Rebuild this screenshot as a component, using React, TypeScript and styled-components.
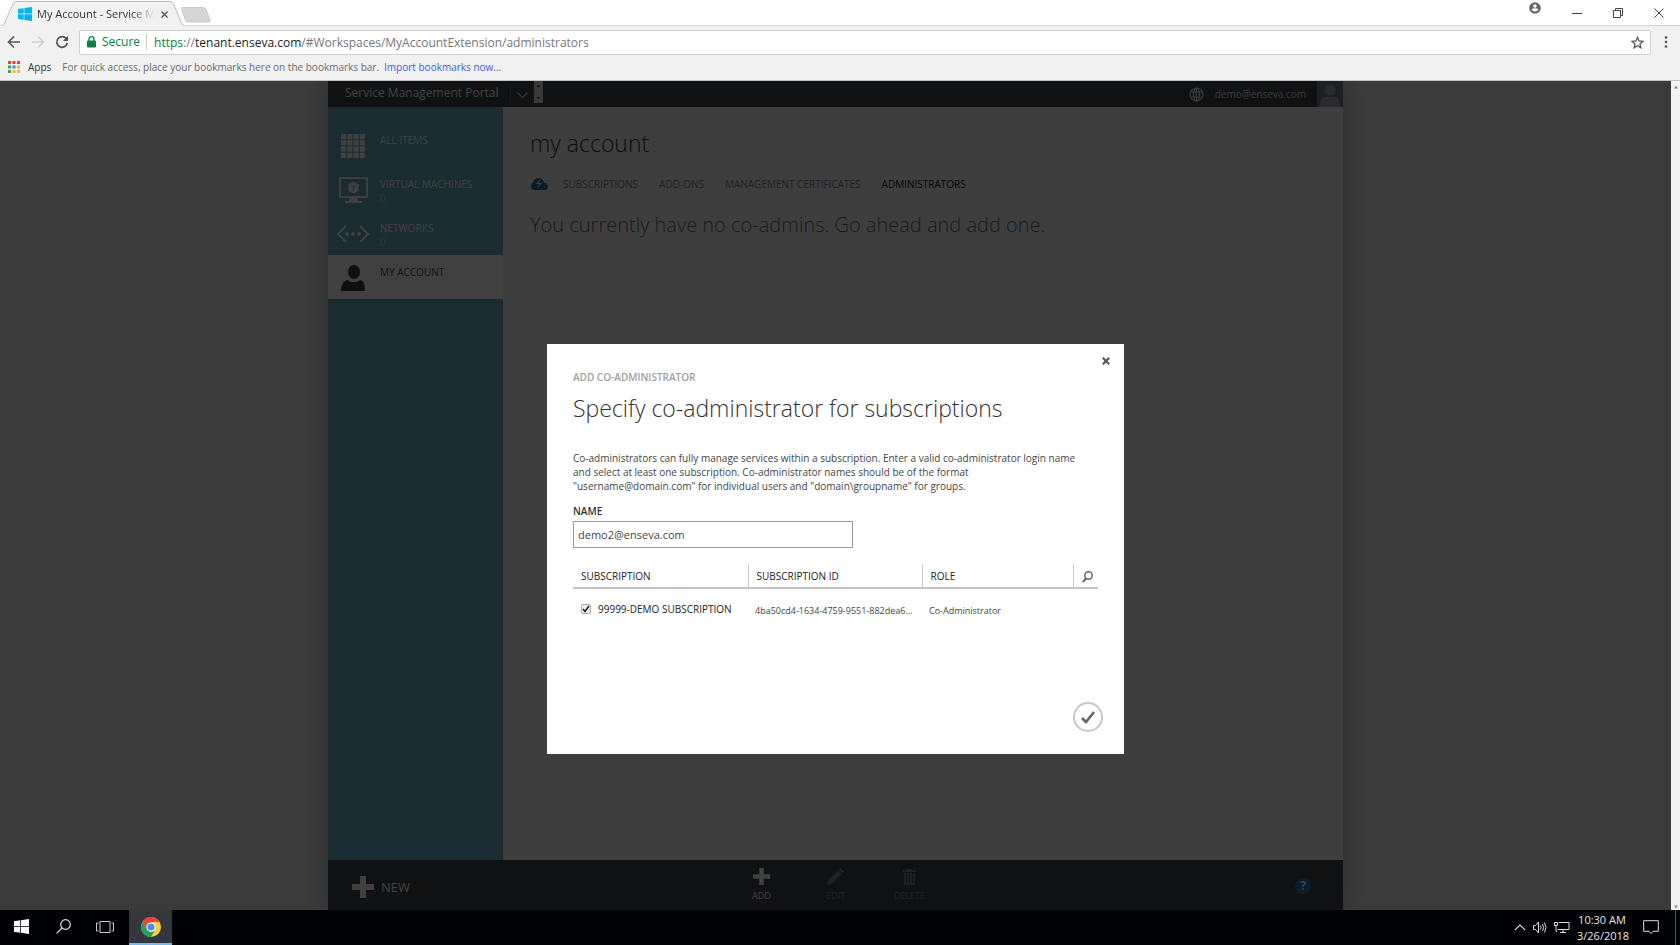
import React from 'react';
import styled, { createGlobalStyle } from 'styled-components';

const GlobalStyle = createGlobalStyle`
  *, *::before, *::after { box-sizing: border-box; }
  body { margin: 0; background: #000; }
  body, button, input { font-family: 'Open Sans', 'Noto Sans', sans-serif; }
  button { margin: 0; padding: 0; border: 0; background: none; color: inherit; cursor: pointer; }
  h1, h2, p { margin: 0; }
  a { text-decoration: none; color: inherit; }
  svg { display: block; flex: none; }
`;

const Screen = styled.div`
  display: flex;
  flex-direction: column;
  min-height: 100vh;
`;

/* Browser frame */

const TabStrip = styled.header`
  display: flex;
  height: 26px;
  background: #fefefe;
  border-bottom: 1px solid #d4d4d4;
`;

const BrowserTab = styled.div`
  position: relative;
  display: flex;
  align-items: center;
  width: 181px;
  height: 26px;
  padding: 2px 0 0 18px;
`;

const TabShape = styled.svg`
  position: absolute;
  left: 0;
  top: 0;
`;

const TabTitle = styled.span`
  position: relative;
  width: 118px;
  margin: 0 6px 0 5px;
  white-space: nowrap;
  font-size: 11px;
  line-height: 18px;
  color: #333;
  mask-image: linear-gradient(to right, #000 80%, transparent);
`;

const Layer = styled.span`
  position: relative;
`;

const TabClose = styled.button`
  position: relative;
`;

const NewTab = styled.button`
  align-self: flex-start;
  margin-top: 7px;
`;

const WindowControls = styled.div`
  display: flex;
  gap: 31px;
  margin-left: auto;
  padding-right: 16px;
`;

const WindowButton = styled.button<{ $raised?: boolean }>`
  display: flex;
  align-items: center;
  height: ${p => (p.$raised ? 16 : 25)}px;
`;

const Toolbar = styled.div`
  display: flex;
  align-items: center;
  height: 32px;
  padding: 0 12px 0 7px;
  background: #f1f1f1;
`;

const NavButtons = styled.div`
  display: flex;
  gap: 10px;
  width: 72px;
`;

const Omnibox = styled.div`
  display: flex;
  flex: 1;
  align-items: center;
  height: 25px;
  padding: 0 6px 0 7px;
  background: #fff;
  border: 1px solid #d0d0d0;
  border-radius: 2px;
  font-size: 12px;
`;

const Secure = styled.span`
  margin-left: 6px;
  padding-right: 6px;
  border-right: 1px solid #ccc;
  line-height: 16px;
  color: #0b8043;
`;

const Address = styled.span`
  flex: 1;
  padding-left: 7px;
  color: #777;
  b { font-weight: 400; color: #222; }
  i { font-style: normal; color: #0b8043; }
`;

const MenuButton = styled.button`
  margin-left: 13px;
`;

const BookmarksBar = styled.nav`
  display: flex;
  align-items: center;
  height: 23px;
  padding: 0 8px 4px;
  background: #f1f1f1;
  border-bottom: 1px solid #c4c4c4;
  font-size: 10px;
  color: #6a6a6a;
  a { margin-left: 5px; color: #3b62d6; }
`;

const Apps = styled.button`
  display: flex;
  align-items: center;
  gap: 8px;
  margin-right: 11px;
  font-size: 10px;
  color: #333;
`;

/* Web page */

const Page = styled.div`
  position: relative;
  display: flex;
  flex: 1;
`;

const Backdrop = styled.div`
  display: flex;
  flex: 1;
  justify-content: center;
  overflow: hidden;
  background: #e8e8e8;
`;

const Portal = styled.div`
  display: flex;
  flex-direction: column;
  width: 100%;
  max-width: 1015px;
  background: #f8f8f8;
  box-shadow: 0 0 24px rgba(0, 0, 0, 0.25);
`;

const PortalHeader = styled.header`
  display: flex;
  align-items: center;
  height: 26px;
  padding-left: 17px;
  background: #404448;
  color: #fff;
  font-size: 12px;
`;

const Brand = styled.span`
  padding: 0 11px 2px 0;
  border-right: 1px solid #5c6064;
  line-height: 16px;
`;

const HeaderButton = styled.button`
  margin: 2px 6px 0 6px;
`;

const Spinner = styled.button`
  display: flex;
  align-self: flex-start;
`;

const Account = styled.div`
  display: flex;
  align-items: center;
  gap: 11px;
  margin-left: auto;
  font-size: 10px;
  color: #e4e4e4;
`;

const PortalBody = styled.div`
  display: flex;
  flex: 1;
`;

const Sidebar = styled.nav`
  width: 175px;
  padding-top: 16px;
  background: #6cacc8;
`;

const SideItem = styled.a<{ $active?: boolean }>`
  display: flex;
  height: 44px;
  padding-left: 8px;
  background: ${p => (p.$active ? '#fff' : 'transparent')};
  color: ${p => (p.$active ? '#3c3c44' : '#fff')};
`;

const SideIcon = styled.span`
  display: flex;
  align-items: center;
  justify-content: center;
  width: 34px;
  height: 46px;
`;

const SideLabel = styled.span`
  margin-left: 10px;
  padding-top: 10px;
  font-size: 10px;
  line-height: 14px;
  small {
    display: block;
    font-size: 10px;
    color: #b4d4e4;
  }
`;

const Main = styled.main`
  flex: 1;
  padding: 19px 27px;
`;

const PageTitle = styled.h1`
  font-size: 23px;
  font-weight: 300;
  line-height: 34px;
  color: #333;
`;

const TabRow = styled.nav`
  display: flex;
  align-items: center;
  gap: 21px;
  margin-top: 16px;
  font-size: 10px;
  line-height: 16px;
  color: #7c7c7c;
`;

const TabLink = styled.a<{ $active?: boolean }>`
  color: ${p => (p.$active ? '#101010' : 'inherit')};
`;

const CloudMark = styled.span`
  margin-right: -6px;
`;

const EmptyNote = styled.p`
  margin-top: 17px;
  font-size: 20px;
  font-weight: 300;
  line-height: 32px;
  color: #666;
`;

const CommandBar = styled.footer`
  display: grid;
  grid-template-columns: 1fr auto 1fr;
  align-items: center;
  height: 50px;
  padding: 0 24px;
  background: #404448;
  color: #fff;
`;

const NewButton = styled.button`
  display: flex;
  align-items: center;
  gap: 7px;
  margin-top: 3px;
  font-size: 13px;
`;

const Commands = styled.div`
  display: flex;
`;

const Command = styled.button`
  display: flex;
  flex-direction: column;
  align-items: center;
  gap: 4px;
  width: 74px;
  font-size: 9px;
  line-height: 13px;
  &:disabled { color: #8c8c8c; }
`;

const HelpButton = styled.button`
  justify-self: end;
  width: 16px;
  height: 16px;
  margin: 2px 8px 0 0;
  border-radius: 50%;
  background: #1c78c0;
  color: #fff;
  font-size: 12px;
  font-weight: 700;
  line-height: 16px;
`;

const Scrollbar = styled.div`
  display: flex;
  flex-direction: column;
  justify-content: space-between;
  align-items: center;
  width: 9px;
  padding: 4px 0 1px;
  background: #f1f1f1;
`;

/* Dialog */

const Overlay = styled.div`
  position: absolute;
  inset: 0 9px 0 0;
  display: flex;
  align-items: flex-start;
  justify-content: center;
  padding-top: 263px;
  background: rgba(0, 0, 0, 0.75);
`;

const Dialog = styled.form`
  display: flex;
  flex-direction: column;
  width: 577px;
  min-height: 410px;
  padding: 11px 21px 22px 26px;
  background: #fff;
  color: #444;
`;

const DialogClose = styled.button`
  align-self: flex-end;
  margin: 0 -9px 0 0;
  padding: 2px;
`;

const Eyebrow = styled.p`
  margin-top: 2px;
  font-size: 10px;
  font-weight: 600;
  line-height: 16px;
  color: #a0a0a0;
`;

const DialogTitle = styled.h2`
  margin-top: 6px;
  font-size: 23px;
  font-weight: 300;
  line-height: 34px;
  color: #333;
`;

const Description = styled.p`
  margin-top: 26px;
  font-size: 10px;
  line-height: 14px;
`;

const FieldLabel = styled.label`
  margin-top: 10px;
  font-size: 10px;
  font-weight: 600;
  line-height: 16px;
  color: #333;
`;

const TextField = styled.input`
  width: 280px;
  height: 27px;
  margin-top: 2px;
  padding: 0 4px;
  border: 1px solid #999;
  outline: 0;
  font-size: 11px;
  color: #444;
`;

const Grid = styled.table`
  width: 525px;
  margin-top: 16px;
  border-collapse: collapse;
  table-layout: fixed;
  font-size: 9px;
  text-align: left;
`;

const HeadCell = styled.th<{ $width: number }>`
  width: ${p => p.$width}px;
  height: 24px;
  padding: 0 0 0 8px;
  border-bottom: 2px solid #c4c4c4;
  border-right: 1px solid #c8c8c8;
  font-size: 10px;
  font-weight: 500;
  color: #222;
  &:last-child { border-right: 0; }
`;

const SearchButton = styled.button`
  display: block;
  margin-top: 2px;
`;

const Cell = styled.td`
  height: 44px;
  padding: 0 0 0 7px;
  white-space: nowrap;
`;

const RowLabel = styled.label`
  display: flex;
  align-items: center;
  gap: 7px;
  padding-bottom: 3px;
  font-size: 10px;
  font-weight: 500;
  color: #222;
`;

const CheckBox = styled.input`
  appearance: none;
  width: 10px;
  height: 10px;
  margin: 0 0 0 1px;
  border: 1px solid #aaa;
  border-radius: 2px;
  background: #eee;
  &:checked {
    background: #eee url("data:image/svg+xml,%3Csvg xmlns='http://www.w3.org/2000/svg' viewBox='0 0 8 8'%3E%3Cpath d='M1 4l2 2.4L7 1' fill='none' stroke='%23222' stroke-width='1.6'/%3E%3C/svg%3E") center / 8px 8px;
  }
`;

const SubmitButton = styled.button`
  display: flex;
  align-items: center;
  justify-content: center;
  align-self: flex-end;
  width: 30px;
  height: 30px;
  margin-top: auto;
  border: 2px solid #c8c8c8;
  border-radius: 50%;
`;

/* Taskbar */

const Taskbar = styled.footer`
  display: flex;
  align-items: stretch;
  height: 35px;
  background: #010205;
  color: #e6e6e6;
`;

const TaskButton = styled.button<{ $active?: boolean }>`
  display: flex;
  align-items: center;
  justify-content: center;
  width: ${p => (p.$active ? 43 : 42)}px;
  margin-left: ${p => (p.$active ? 3 : 0)}px;
  background: ${p => (p.$active ? '#35373c' : 'transparent')};
  border-bottom: 2px solid ${p => (p.$active ? '#76b9ed' : 'transparent')};
`;

const Tray = styled.div`
  display: flex;
  align-items: center;
  gap: 7px;
  margin-left: auto;
  padding-right: 4px;
`;

const Clock = styled.time`
  width: 50px;
  font-size: 11px;
  line-height: 16px;
  text-align: center;
  white-space: nowrap;
`;

const Notifications = styled.button`
  margin: 0 9px;
`;

const DesktopEdge = styled.span`
  align-self: stretch;
  width: 1px;
  background: #555;
`;

const WindowsLogo = ({ size, color }: { size: number; color: string }) => (
  <svg width={size} height={size} viewBox="0 0 14 14" fill={color}>
    <path d="M0 2l5.7-.8v5.4H0zM6.4 1.1L14 0v6.6H6.4zM0 7.3h5.7v5.5L0 12zM6.4 7.3H14V14l-7.6-1.1z" />
  </svg>
);

const Plus = ({ size }: { size: number }) => (
  <svg width={size} height={size} viewBox="0 0 22 22" fill="currentColor">
    <path d="M8 0h6v8h8v6h-8v8H8v-8H0V8h8z" />
  </svg>
);

const APP_COLORS = ['#ea4335', '#ea4335', '#ea4335', '#34a853', '#4285f4', '#fbbc05', '#34a853', '#fbbc05', '#fbbc05'];

const GridIcon = () => (
  <svg width="24" height="24" viewBox="0 0 24 24" fill="currentColor">
    {[0, 1, 2, 3].map(r =>
      [0, 1, 2, 3].map(c => <rect key={`${r}${c}`} x={c * 6.25} y={r * 6.25} width="5.2" height="5.2" />)
    )}
  </svg>
);

const MachineIcon = () => (
  <svg width="29" height="27" viewBox="0 0 29 27">
    <rect x="1" y="1" width="27" height="19" fill="none" stroke="currentColor" strokeWidth="1.8" />
    <path d="M11 20h7l1 4h4v2H6v-2h4z" fill="currentColor" />
    <path d="M14.5 4.500l5 2.800v6.400l-5 2.800-5-2.800V7.300z" fill="currentColor" />
    <path d="M12 8.500l2.500 1.800L17 8.500M14.500 10.300v3.400" fill="none" stroke="#6cacc8" strokeWidth="1" />
  </svg>
);

const NetworkIcon = () => (
  <svg width="34" height="18" viewBox="0 0 34 18">
    <path d="M10 1L2 9l8 8M24 1l8 8-8 8" fill="none" stroke="currentColor" strokeWidth="2" />
    <g fill="currentColor">
      <circle cx="11" cy="9" r="1.900" />
      <circle cx="17" cy="9" r="1.900" />
      <circle cx="23" cy="9" r="1.900" />
    </g>
  </svg>
);

const PersonIcon = () => (
  <svg width="24" height="26" viewBox="0 0 24 26" fill="currentColor">
    <ellipse cx="13" cy="7" rx="6" ry="7" />
    <path d="M0 26c0-6 2-10 7-11 3 3 9 3 12 0 4 1 5 5 5 11z" />
  </svg>
);

const ChromeIcon = () => (
  <svg width="20" height="20" viewBox="0 0 20 20">
    <circle cx="10" cy="10" r="10" fill="#ffcd40" />
    <path d="M10 10L5.700 12.500 1.340 5A10 10 0 0 1 18.660 5H10z" fill="#dd4b3e" />
    <path d="M1.340 5L5.700 12.500l4.300 2.500 3.500-1L10 20A10 10 0 0 1 1.340 5z" fill="#1da462" />
    <circle cx="10" cy="10" r="4.600" fill="#fff" />
    <circle cx="10" cy="10" r="3.600" fill="#4c8bf5" />
  </svg>
);

const GlobeIcon = () => (
  <svg width="15" height="15" viewBox="0 0 15 15" fill="none" stroke="#e4e4e4" strokeWidth="1.200">
    <circle cx="7.500" cy="7.500" r="6.500" />
    <ellipse cx="7.500" cy="7.500" rx="3" ry="6.500" />
    <path d="M1.500 5h12M1.500 10h12M7.500 1v13" />
  </svg>
);

const sideItems = [
  { label: 'ALL ITEMS', icon: <GridIcon /> },
  { label: 'VIRTUAL MACHINES', count: '0', icon: <MachineIcon /> },
  { label: 'NETWORKS', count: '0', icon: <NetworkIcon /> },
  { label: 'MY ACCOUNT', icon: <PersonIcon />, active: true },
];

const tabs = ['SUBSCRIPTIONS', 'ADD-ONS', 'MANAGEMENT CERTIFICATES', 'ADMINISTRATORS'];

function BrowserChrome() {
  return (
    <>
      <TabStrip>
        <BrowserTab>
          <TabShape width="188" height="26" viewBox="0 0 188 26">
            <path d="M2 26Q4 25 5 22L13 4Q14 1.500 16 1.500H170Q172.500 1.500 173.500 4L181 22Q182 25 184 26z" fill="#f1f1f1" />
            <path d="M2 25.500Q4 25 5 22L13 4Q14 1.500 16 1.500H170Q172.500 1.500 173.500 4L181 22Q182 25 184 25.500" fill="none" stroke="#bcbcbc" />
          </TabShape>
          <Layer><WindowsLogo size={14} color="#00b4f0" /></Layer>
          <TabTitle>My Account - Service Ma</TabTitle>
          <TabClose type="button" aria-label="Close tab">
            <svg width="7" height="7" viewBox="0 0 7 7" stroke="#555" strokeWidth="1.300"><path d="M.5.5l6 6M6.500.5l-6 6" /></svg>
          </TabClose>
        </BrowserTab>
        <NewTab type="button" aria-label="New tab">
          <svg width="30" height="16" viewBox="0 0 30 16"><path d="M1.500.5H22q2 0 3 2l4 10.500q.6 2-1.500 2H7q-2 0-2.600-2L.6 2.500Q0 .5 1.500.5z" fill="#d6d6d6" stroke="#cacaca" /></svg>
        </NewTab>
        <WindowControls>
          <WindowButton type="button" aria-label="Profile" $raised>
            <svg width="12" height="12" viewBox="0 0 12 12"><circle cx="6" cy="6" r="5.800" fill="#666" /><circle cx="6" cy="4" r="1.700" fill="#fff" /><path d="M2.500 7q3.500-1.300 7 0Q8.500 9.500 6 9.500T2.500 7z" fill="#fff" /></svg>
          </WindowButton>
          <WindowButton type="button" aria-label="Minimize">
            <svg width="10" height="10" viewBox="0 0 10 10" stroke="#444"><path d="M0 5.500h10" /></svg>
          </WindowButton>
          <WindowButton type="button" aria-label="Restore">
            <svg width="10" height="10" viewBox="0 0 10 10" fill="none" stroke="#444"><path d="M.5 2.500h7v7h-7zM2.500 2.500v-2h7v7h-2" /></svg>
          </WindowButton>
          <WindowButton type="button" aria-label="Close">
            <svg width="10" height="10" viewBox="0 0 10 10" stroke="#444"><path d="M.5.5l9 9M9.500.5l-9 9" /></svg>
          </WindowButton>
        </WindowControls>
      </TabStrip>
      <Toolbar>
        <NavButtons>
          <button type="button" aria-label="Back">
            <svg width="14" height="14" viewBox="0 0 14 14" fill="none" stroke="#555" strokeWidth="1.600"><path d="M13 7H2M7 1.500L1.500 7 7 12.500" /></svg>
          </button>
          <button type="button" aria-label="Forward" disabled>
            <svg width="14" height="14" viewBox="0 0 14 14" fill="none" stroke="#d0d0d0" strokeWidth="1.600"><path d="M1 7h11M7 1.500L12.500 7 7 12.500" /></svg>
          </button>
          <button type="button" aria-label="Reload">
            <svg width="14" height="14" viewBox="0 0 14 14"><path d="M11.500 4A5.300 5.300 0 1 0 12.300 8" fill="none" stroke="#555" strokeWidth="1.700" /><path d="M13 .8V6H7.800z" fill="#555" /></svg>
          </button>
        </NavButtons>
        <Omnibox>
          <svg width="9" height="12" viewBox="0 0 9 12"><rect y="4.500" width="9" height="7" rx="1" fill="#0b8043" /><path d="M2 5V3.200a2.500 2.500 0 0 1 5 0V5" fill="none" stroke="#0b8043" strokeWidth="1.300" /></svg>
          <Secure>Secure</Secure>
          <Address><i>https</i>://<b>tenant.enseva.com</b>/#Workspaces/MyAccountExtension/administrators</Address>
          <button type="button" aria-label="Bookmark this page">
            <svg width="13" height="13" viewBox="0 0 13 13" fill="none" stroke="#555" strokeWidth="1.300"><path d="M6.500 1.300l1.500 3.700 4 .3-3 2.600.9 3.900-3.400-2.100-3.400 2.100.9-3.900-3-2.600 4-.3z" /></svg>
          </button>
        </Omnibox>
        <MenuButton type="button" aria-label="Menu">
          <svg width="4" height="12" viewBox="0 0 4 12" fill="#555"><circle cx="2" cy="1.500" r="1.300" /><circle cx="2" cy="6" r="1.300" /><circle cx="2" cy="10.500" r="1.300" /></svg>
        </MenuButton>
      </Toolbar>
      <BookmarksBar>
        <Apps type="button">
          <svg width="12" height="12" viewBox="0 0 12 12">
            {APP_COLORS.map((fill, i) => <rect key={i} x={(i % 3) * 4.500} y={Math.floor(i / 3) * 4.500} width="3" height="3" fill={fill} />)}
          </svg>
          Apps
        </Apps>
        For quick access, place your bookmarks here on the bookmarks bar. <a href="#import">Import bookmarks now...</a>
      </BookmarksBar>
    </>
  );
}

function PortalPage() {
  return (
    <Portal>
      <PortalHeader>
        <Brand>Service Management Portal</Brand>
        <HeaderButton type="button" aria-label="Open menu">
          <svg width="11" height="7" viewBox="0 0 11 7" fill="none" stroke="#e0e0e0" strokeWidth="1.300"><path d="M.5.5l5 5 5-5" /></svg>
        </HeaderButton>
        <Spinner type="button" aria-label="Scroll">
          <svg width="9" height="22" viewBox="0 0 9 22"><path d="M0 0h9v22H0z" fill="#e0e0e0" /><path d="M2.500 6l2-2 2 2zM2.500 16l2 2 2-2z" fill="#555" /></svg>
        </Spinner>
        <Account>
          <GlobeIcon />
          demo@enseva.com
          <svg width="26" height="26" viewBox="0 0 26 26"><path d="M0 0h26v26H0z" fill="#747c8c" /><circle cx="13" cy="9" r="5.500" fill="#a8acb8" /><path d="M3 26q0-10 5-10h10q5 0 5 10z" fill="#a8acb8" /></svg>
        </Account>
      </PortalHeader>
      <PortalBody>
        <Sidebar>
          {sideItems.map(item => (
            <SideItem key={item.label} href="#" $active={item.active}>
              <SideIcon>{item.icon}</SideIcon>
              <SideLabel>{item.label}{item.count && <small>{item.count}</small>}</SideLabel>
            </SideItem>
          ))}
        </Sidebar>
        <Main>
          <PageTitle>my account</PageTitle>
          <TabRow>
            <CloudMark>
              <svg width="18" height="12" viewBox="0 0 18 12"><path d="M4 12a4 4 0 0 1-1-7.500Q4 0 8.500 0T14 4.500Q18 5 18 8.500T14.500 12z" fill="#2476b4" /><path d="M10 1L6 6h3l-2 5 5-6H9z" fill="#f8f8f8" /></svg>
            </CloudMark>
            {tabs.map(t => <TabLink key={t} href="#" $active={t === 'ADMINISTRATORS'}>{t}</TabLink>)}
          </TabRow>
          <EmptyNote>You currently have no co-admins. Go ahead and add one.</EmptyNote>
        </Main>
      </PortalBody>
      <CommandBar>
        <NewButton type="button"><Plus size={22} />NEW</NewButton>
        <Commands>
          <Command type="button"><Plus size={17} />ADD</Command>
          <Command type="button" disabled>
            <svg width="17" height="17" viewBox="0 0 17 17" fill="currentColor"><path d="M0 17l1.500-5L11 2.500 14.500 6 5 15.500zM12 1.500L13.500 0 17 3.500 15.500 5z" /></svg>
            EDIT
          </Command>
          <Command type="button" disabled>
            <svg width="13" height="17" viewBox="0 0 13 17"><path d="M0 2.500h4V1h5v1.500h4V4H0z" fill="currentColor" /><path d="M2 5v11h9V5M5 5v11M8 5v11" fill="none" stroke="currentColor" strokeWidth="1.600" /></svg>
            DELETE
          </Command>
        </Commands>
        <HelpButton type="button">?</HelpButton>
      </CommandBar>
    </Portal>
  );
}

function CoAdminDialog() {
  return (
    <Dialog role="dialog" aria-labelledby="dialog-title">
      <DialogClose type="button" aria-label="Close dialog">
        <svg width="8" height="8" viewBox="0 0 8 8" stroke="#555" strokeWidth="2.200"><path d="M.8.8l6.400 6.400M7.200.8L.8 7.200" /></svg>
      </DialogClose>
      <Eyebrow>ADD CO-ADMINISTRATOR</Eyebrow>
      <DialogTitle id="dialog-title">Specify co-administrator for subscriptions</DialogTitle>
      <Description>
        Co-administrators can fully manage services within a subscription. Enter a valid co-administrator login name<br />
        and select at least one subscription. Co-administrator names should be of the format<br />
        "username@domain.com" for individual users and "domain\groupname" for groups.
      </Description>
      <FieldLabel htmlFor="admin-name">NAME</FieldLabel>
      <TextField id="admin-name" type="text" defaultValue="demo2@enseva.com" />
      <Grid>
        <thead>
          <tr>
            <HeadCell $width={175}>SUBSCRIPTION</HeadCell>
            <HeadCell $width={174}>SUBSCRIPTION ID</HeadCell>
            <HeadCell $width={151}>ROLE</HeadCell>
            <HeadCell $width={25}>
              <SearchButton type="button" aria-label="Search">
                <svg width="11" height="12" viewBox="0 0 11 12" fill="none" stroke="#666"><circle cx="6.500" cy="4.500" r="3.700" strokeWidth="1.500" /><path d="M4 7.500L.8 11" strokeWidth="1.900" /></svg>
              </SearchButton>
            </HeadCell>
          </tr>
        </thead>
        <tbody>
          <tr>
            <Cell>
              <RowLabel><CheckBox type="checkbox" defaultChecked />99999-DEMO SUBSCRIPTION</RowLabel>
            </Cell>
            <Cell>4ba50cd4-1634-4759-9551-882dea6...</Cell>
            <Cell>Co-Administrator</Cell>
            <Cell />
          </tr>
        </tbody>
      </Grid>
      <SubmitButton type="submit" aria-label="Complete">
        <svg width="14" height="13" viewBox="0 0 14 13" fill="none" stroke="#666" strokeWidth="2.600"><path d="M1 7l4 4 8-10" /></svg>
      </SubmitButton>
    </Dialog>
  );
}

function DesktopTaskbar() {
  return (
    <Taskbar>
      <TaskButton type="button" aria-label="Start"><WindowsLogo size={15} color="#fff" /></TaskButton>
      <TaskButton type="button" aria-label="Search">
        <svg width="15" height="15" viewBox="0 0 15 15" fill="none" stroke="#ddd" strokeWidth="1.200"><circle cx="9.500" cy="5.500" r="4.800" /><path d="M6 9L.6 14.400" /></svg>
      </TaskButton>
      <TaskButton type="button" aria-label="Task view">
        <svg width="18" height="14" viewBox="0 0 18 14" fill="none" stroke="#ccc"><path d="M4 1.500h10v11H4zM2.500 3H.5v8h2M15.500 3h2v8h-2" /></svg>
      </TaskButton>
      <TaskButton type="button" aria-label="Google Chrome" $active><ChromeIcon /></TaskButton>
      <Tray>
        <button type="button" aria-label="Show hidden icons">
          <svg width="12" height="7" viewBox="0 0 12 7" fill="none" stroke="#ddd" strokeWidth="1.200"><path d="M.8 6.200L6 1l5.200 5.200" /></svg>
        </button>
        <button type="button" aria-label="Volume">
          <svg width="14" height="13" viewBox="0 0 14 13" fill="none" stroke="#ddd"><path d="M.5 4.500h2l3-3.500v11l-3-3.500h-2zM7.500 4.500q1.200 2 0 4M9.500 3q2.200 3.500 0 7M11.500 1.500q3 5 0 10" /></svg>
        </button>
        <button type="button" aria-label="Network">
          <svg width="16" height="13" viewBox="0 0 16 13" fill="none" stroke="#ddd"><path d="M5 1.500h10v7H3.500M9 8.500v3M6 11.500h6M.5 1.500h3v3h-3zM2 4.500v6h1" /></svg>
        </button>
        <Clock>10:30 AM<br />3/26/2018</Clock>
        <Notifications type="button" aria-label="Notifications">
          <svg width="16" height="15" viewBox="0 0 16 15" fill="none" stroke="#ddd"><path d="M.7.7h14.600v10.600H10L8 13.500 6 11.300H.7z" /></svg>
        </Notifications>
        <DesktopEdge />
      </Tray>
    </Taskbar>
  );
}

export default function App() {
  return (
    <Screen>
      <GlobalStyle />
      <BrowserChrome />
      <Page>
        <Backdrop><PortalPage /></Backdrop>
        <Overlay><CoAdminDialog /></Overlay>
        <Scrollbar>
          <svg width="6" height="4" viewBox="0 0 6 4"><path d="M1 3.500l2-3 2 3z" fill="#888" /></svg>
          <svg width="6" height="4" viewBox="0 0 6 4"><path d="M1 .5l2 3 2-3z" fill="#888" /></svg>
        </Scrollbar>
      </Page>
      <DesktopTaskbar />
    </Screen>
  );
}
